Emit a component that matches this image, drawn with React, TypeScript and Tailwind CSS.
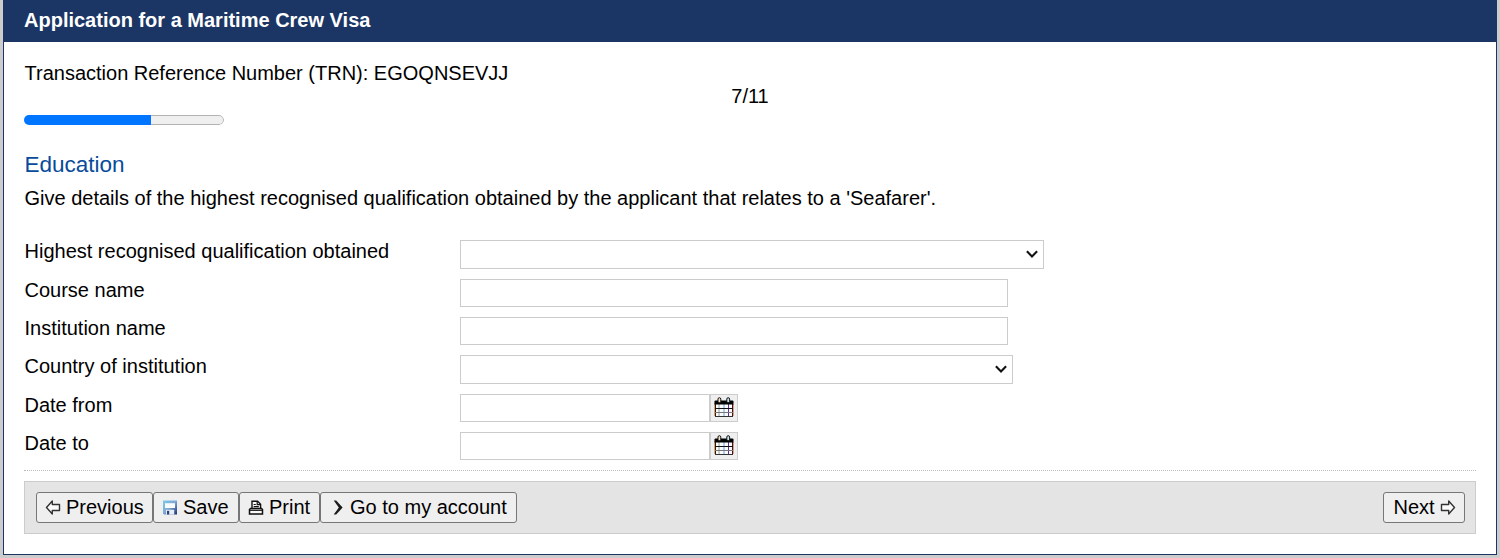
import type { ReactNode } from "react";

function Chevron() {
  return (
    <svg className="pointer-events-none absolute right-[5px] top-[10px]" width="13" height="9" viewBox="0 0 13 9" fill="none" aria-hidden="true">
      <path d="M.9 1.3 6 6.400 11.100 1.300" stroke="#111" strokeWidth="2.1" />
    </svg>
  );
}

function SelectBox({ id, width }: { id: string; width: string }) {
  return (
    <div className={`relative h-[29px] ${width}`}>
      <select id={id} className="block h-full w-full appearance-none rounded-none border border-[#ccc] bg-white" />
      <Chevron />
    </div>
  );
}

function TextBox({ id, width }: { id: string; width: string }) {
  return <input id={id} type="text" className={`block h-7 border border-[#ccc] bg-white ${width}`} />;
}

function CalendarIcon() {
  return (
    <svg width="20" height="21" viewBox="0 0 20 21" fill="none" aria-hidden="true">
      <rect x="1" y="4" width="18" height="15.6" fill="#fafafa" />
      <path d="M.5 6v13" stroke="#e8a050" />
      <path d="M4.500 7v12" stroke="#eac6ac" />
      <path d="M5.500 7v12" stroke="#9fd4f0" />
      <path d="M10 7v12" stroke="#6c98e0" />
      <path d="M14.500 7v12" stroke="#5a2a98" />
      <path d="M1.500 7v12.500" stroke="#123" />
      <path d="M18.500 7v12.500" stroke="#501010" />
      <path d="M19.500 7v12" stroke="#b06a5a" strokeWidth=".6" />
      <path d="M1 11.500h18" stroke="#111" />
      <path d="M1 15.500h18" stroke="#777" />
      <path d="M1 19.500h18" stroke="#333" />
      <path d="M.5 7.400V4.600Q.5 3.400 1.700 3.400h16.600q1.200 0 1.200 1.200v2.800z" fill="#000" />
      <rect x="4" y=".7" width="2.800" height="5" rx="1.400" fill="#f3e2c6" stroke="#111" />
      <rect x="12.800" y=".7" width="2.800" height="5" rx="1.400" fill="#c5e5ef" stroke="#111" />
    </svg>
  );
}

function DateBox({ id }: { id: string }) {
  return (
    <div className="flex">
      <TextBox id={id} width="w-[250px]" />
      <button type="button" aria-label="Pick a date" className="flex h-7 w-7 items-start justify-center border border-[#ccc] bg-[#efefef] pt-[2px]">
        <CalendarIcon />
      </button>
    </div>
  );
}

function ArrowIcon({ flip = false }: { flip?: boolean }) {
  return (
    <svg width="16" height="16" viewBox="0 0 16 16" className={flip ? "-scale-x-100" : ""} fill="#fafafa" aria-hidden="true">
      <path d="M1.500 7.500 7.300 1v3.500h7.200v6H7.300V14z" stroke="#333" strokeWidth="1.400" strokeLinejoin="round" />
    </svg>
  );
}

function SaveIcon() {
  return (
    <svg width="16" height="16" viewBox="0 0 16 16" aria-hidden="true">
      <defs>
        <linearGradient id="disk" x1="0" y1="0" x2="1" y2="1">
          <stop offset="0" stopColor="#79cdec" />
          <stop offset=".5" stopColor="#7fa6d2" />
          <stop offset="1" stopColor="#17326f" />
        </linearGradient>
      </defs>
      <path d="M1 .5h14v14H2.200L1 13.300z" fill="url(#disk)" />
      <path d="M3 3.200h10v4.800H3z" fill="#f9fbfd" />
      <path d="M4 9.800h8.200v4.700H4z" fill="#e9eef5" />
      <path d="M5 10.800h2.200v3.700H5z" fill="#24437f" />
    </svg>
  );
}

function PrintIcon() {
  return (
    <svg width="16" height="16" viewBox="0 0 16 16" fill="#fafafa" stroke="#111" aria-hidden="true">
      <path d="M4 9V1.200h5.600l3 3V9" strokeWidth="1.400" />
      <path d="M9.200 1.200v3.400h3.400M5.600 4.500h2.200M5.600 6.700h5.200" strokeWidth="1.200" fill="none" />
      <path d="M3.500 8.500h-1L1.500 9.500v4.500h13V9.500l-1-1z" strokeWidth="1.500" />
      <path d="M1.500 10.300h13" strokeWidth="1.200" />
    </svg>
  );
}

function GoIcon() {
  return (
    <svg width="16" height="16" viewBox="0 0 16 16" aria-hidden="true">
      <path d="M4.700.6h2.500L13.600 7.600 7.200 14.500H4.700L9.800 7.600z" fill="#1c1c1c" />
    </svg>
  );
}

function ToolButton({ width, children }: { width: string; children: ReactNode }) {
  return (
    <button type="button" className={`flex h-[31px] items-center gap-[5px] whitespace-nowrap rounded-[3px] border border-[#767676] bg-[#efefef] pl-2 ${width}`}>
      {children}
    </button>
  );
}

function Row({ id, label, height = "h-[38px]", children }: { id: string; label: string; height?: string; children: ReactNode }) {
  return (
    <div className={`flex items-start ${height}`}>
      <label htmlFor={id} className="w-[436px] pl-[0.5px] leading-[23px]">{label}</label>
      {children}
    </div>
  );
}

export default function App() {
  return (
    <div className="h-[558px] bg-[#ccc] px-[3px] font-['Liberation_Sans',Arial,sans-serif] text-[20px] leading-[23px] text-black">
      <div className="flex h-[555px] flex-col border-x border-b border-[#1b3564] bg-white">
        <header className="h-[42px] bg-[#1b3564] pl-5 pt-[9px] font-bold text-white">Application for a Maritime Crew Visa</header>
        <main className="flex flex-col px-5 pt-5">
          <p className="pl-[0.5px]">Transaction Reference Number (TRN): EGOQNSEVJJ</p>
          <p className="text-center">7/11</p>
          <div role="progressbar" aria-valuenow={7} aria-valuemax={11} className="mt-[7px] flex h-[10px] w-[200px] overflow-hidden rounded-full">
            <div className="w-[127px] bg-[#0075ff]" />
            <div className="flex-1 rounded-r-full border-y border-r border-[#b2b2b2] bg-[#efefef]" />
          </div>
          <h1 className="mt-[27px] pl-[0.5px] text-[22.5px] leading-[26px] text-[#084b9b]">Education</h1>
          <p className="mt-[9px] pl-[0.5px]">Give details of the highest recognised qualification obtained by the applicant that relates to a 'Seafarer'.</p>
          <form className="mt-[30px]">
            <Row id="qualification" label="Highest recognised qualification obtained" height="h-[39px]"><SelectBox id="qualification" width="w-[584px]" /></Row>
            <Row id="course" label="Course name"><TextBox id="course" width="w-[548px]" /></Row>
            <Row id="institution" label="Institution name"><TextBox id="institution" width="w-[548px]" /></Row>
            <Row id="country" label="Country of institution" height="h-[39px]"><SelectBox id="country" width="w-[553px]" /></Row>
            <Row id="from" label="Date from"><DateBox id="from" /></Row>
            <Row id="to" label="Date to"><DateBox id="to" /></Row>
          </form>
          <div className="border-t border-dotted border-[#bbb]" />
          <div className="mt-[10px] flex h-[53px] items-center justify-between border border-[#ccc] bg-[#e4e4e4] pl-[11px] pr-[10px]">
            <div className="flex">
              <ToolButton width="w-[117px]"><ArrowIcon />Previous</ToolButton>
              <ToolButton width="w-[86px]"><SaveIcon />Save</ToolButton>
              <ToolButton width="w-[81px]"><PrintIcon />Print</ToolButton>
              <ToolButton width="w-[197px]"><GoIcon />Go to my account</ToolButton>
            </div>
            <ToolButton width="w-[82px]"><span className="pl-[1.5px]">Next</span><ArrowIcon flip /></ToolButton>
          </div>
        </main>
      </div>
    </div>
  );
}
